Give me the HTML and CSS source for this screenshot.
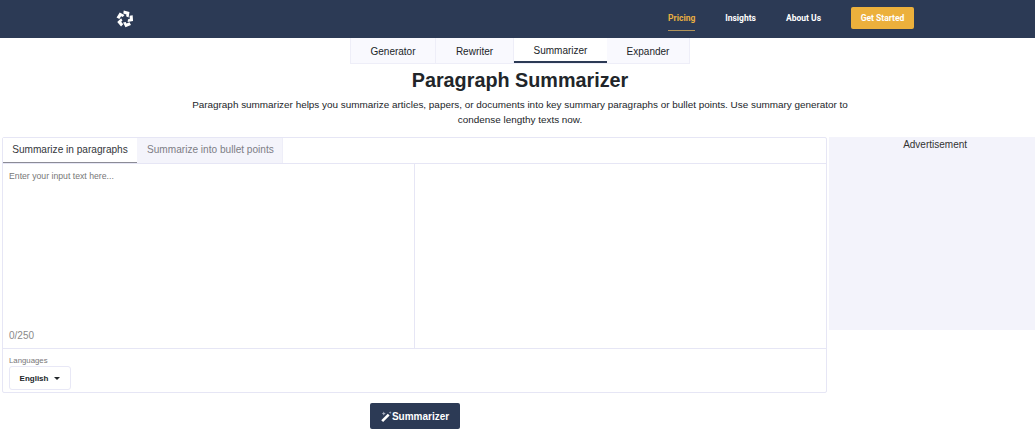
FILE: index.html
```html
<!DOCTYPE html>
<html lang="en">
<head>
    <meta charset="utf-8">
    <title>Paragraph Summarizer</title>
    <link rel="stylesheet" href="styles.css">
</head>
<body>
    <header class="topbar">
        <svg class="logo" viewBox="0 0 20 20" width="18" height="18">
            <g fill="#fff">
                <path id="blade" d="M8.6 .6 L15 2.2 L14 8.2 L11.2 6.9 L11.6 5 L8.1 4 Z"/>
                <use href="#blade" transform="rotate(72 10 10)"/>
                <use href="#blade" transform="rotate(144 10 10)"/>
                <use href="#blade" transform="rotate(216 10 10)"/>
                <use href="#blade" transform="rotate(288 10 10)"/>
            </g>
        </svg>
        <nav class="topnav">
            <a class="topnav-link active">Pricing</a>
            <a class="topnav-link">Insights</a>
            <a class="topnav-link">About Us</a>
        </nav>
        <a class="get-started">Get Started</a>
    </header>

    <div class="hero">
        <div class="tool-tabs">
            <a class="tool-tab">Generator</a>
            <a class="tool-tab">Rewriter</a>
            <a class="tool-tab active">Summarizer</a>
            <a class="tool-tab">Expander</a>
        </div>

        <h1 class="title">Paragraph Summarizer</h1>
        <p class="intro">Paragraph summarizer helps you summarize articles, papers, or documents into key summary paragraphs or bullet points. Use summary generator to condense lengthy texts now.</p>
    </div>

    <div class="workspace">
        <div class="main-col">
            <section class="panel">
                <div class="mode-tabs">
                    <a class="mode-tab active">Summarize in paragraphs</a>
                    <a class="mode-tab">Summarize into bullet points</a>
                </div>
                <div class="editors">
                    <div class="editor-input">
                        <div class="placeholder">Enter your input text here...</div>
                        <div class="counter">0/250</div>
                    </div>
                    <div class="editor-output"></div>
                </div>
                <div class="lang-row">
                    <div class="lang-label">Languages</div>
                    <div class="lang-select">English <span class="caret"></span></div>
                </div>
            </section>
            <div class="submit-row">
                <button class="submit">
                    <svg class="wand" viewBox="0 0 12 12" width="11" height="11">
                        <path fill="#fff" d="M0.3 10 L7.4 2.9 L9.4 4.9 L2.3 12 Z"/>
                        <path fill="#aab0c0" d="M3 .6 L3.7 2.1 L5.2 2.8 L3.7 3.5 L3 5 L2.3 3.5 L.8 2.8 L2.3 2.1 Z M10 .2 L10.5 1.3 L11.6 1.8 L10.5 2.3 L10 3.4 L9.5 2.3 L8.4 1.8 L9.5 1.3 Z"/>
                    </svg>Summarizer
                </button>
            </div>
        </div>
        <aside class="ad">Advertisement</aside>
    </div>
</body>
</html>
```

FILE: styles.css
```css
* { box-sizing: border-box; }

body {
    margin: 0;
    background: #fff;
    color: #212529;
    font-family: "Liberation Sans", Arial, sans-serif;
}

/* top bar */
.topbar {
    display: flex;
    align-items: center;
    height: 38px;
    padding-left: 116px;
    background: #2c3a55;
}
.logo { display: block; }
.topnav {
    display: flex;
    align-self: stretch;
    gap: 30px;
    margin-left: auto;
    margin-right: 30px;
    font-family: Roboto, sans-serif;
}
.topnav-link {
    display: flex;
    align-items: center;
    height: 31px;
    padding-top: 5px;
    font-size: 8.5px;
    font-weight: 700;
    color: #fff;
}
.topnav-link.active {
    color: #e9b041;
    border-bottom: 1px solid #b0935a;
}
.get-started {
    display: flex;
    align-items: center;
    justify-content: center;
    width: 63px;
    height: 22px;
    margin-right: 121px;
    margin-bottom: 2px;
    border-radius: 2px;
    background: #ecb03c;
    color: #fff;
    font-family: Roboto, sans-serif;
    font-size: 8.5px;
    font-weight: 700;
}

/* heading block sits a little right of the page centre */
.hero { padding-left: 5px; }

.tool-tabs {
    display: flex;
    width: 340px;
    height: 26px;
    margin: 0 auto;
    border: 1px solid #eeeef8;
    border-top: 0;
    background: #f9f9fe;
}
.tool-tab {
    display: flex;
    align-items: center;
    justify-content: center;
    height: 25px;
    padding-top: 1px;
    border-right: 1px solid #eeeef8;
    font-size: 10px;
    color: #212529;
}
.tool-tab:nth-child(1) { width: 85px; }
.tool-tab:nth-child(2) { width: 78px; }
.tool-tab:nth-child(3) { width: 93px; }
.tool-tab:nth-child(4) { flex: 1; border-right: 0; }
.tool-tab.active {
    background: #fff;
    border-right: 0;
    border-bottom: 2px solid #2c3a55;
}

.title {
    margin: 3px 0 0;
    font-size: 19.8px;
    line-height: 26px;
    font-weight: 700;
    text-align: center;
    color: #212529;
}
.intro {
    width: 670px;
    margin: 4px auto 0;
    font-size: 9.92px;
    line-height: 15px;
    text-align: center;
}

/* tool area */
.workspace {
    display: flex;
    align-items: flex-start;
    margin-top: 10px;
    padding-left: 2px;
}
.main-col { width: 826px; }
.panel {
    height: 256px;
    border: 1px solid #e6e6f5;
    border-radius: 2px;
}
.mode-tabs {
    display: flex;
    height: 26px;
    border-bottom: 1px solid #e6e6f5;
}
.mode-tab {
    display: flex;
    align-items: center;
    width: 146px;
    padding: 0 0 2px 10px;
    font-size: 10.1px;
    color: #7d7d85;
    background: #f4f4fb;
    border-right: 1px solid #eeeef8;
}
.mode-tab.active {
    width: 134px;
    padding: 0 0 2px;
    justify-content: center;
    color: #33363b;
    background: #fff;
    border-right: 0;
    border-bottom: 1px solid #8b8b96;
}
.editors {
    display: flex;
    height: 185px;
    border-bottom: 1px solid #e6e6f5;
}
.editor-input {
    display: flex;
    flex-direction: column;
    justify-content: space-between;
    width: 412px;
    padding: 7px 6px 7px;
    border-right: 1px solid #e6e6f5;
}
.editor-output { flex: 1; }
.placeholder { font-size: 8.7px; color: #777; }
.counter { font-size: 10px; color: #8a8a8a; }

.lang-row { padding: 7px 6px 0; }
.lang-label { font-size: 7.8px; color: #777; }
.lang-select {
    display: flex;
    align-items: center;
    justify-content: center;
    gap: 6px;
    width: 62px;
    height: 24px;
    margin-top: 1px;
    border: 1px solid #e8e8f6;
    border-radius: 3px;
    font-size: 8px;
    font-weight: 700;
}
.caret {
    width: 0;
    height: 0;
    border-left: 3px solid transparent;
    border-right: 3px solid transparent;
    border-top: 3px solid #212529;
}

.submit-row {
    display: flex;
    padding-left: 368px;
    margin-top: 10px;
}
.submit {
    display: flex;
    align-items: center;
    justify-content: center;
    width: 90px;
    height: 26px;
    padding: 0;
    border: 0;
    border-radius: 2px;
    background: #2c3a55;
    color: #fff;
    font-family: "Liberation Sans", Arial, sans-serif;
    font-size: 10px;
    font-weight: 700;
}

/* ad slot */
.ad {
    width: 206px;
    height: 193px;
    margin-left: 2px;
    padding: 2px 0 0 6px;
    background: #f3f3fb;
    font-size: 10px;
    line-height: 12px;
    text-align: center;
    color: #333;
}
```
